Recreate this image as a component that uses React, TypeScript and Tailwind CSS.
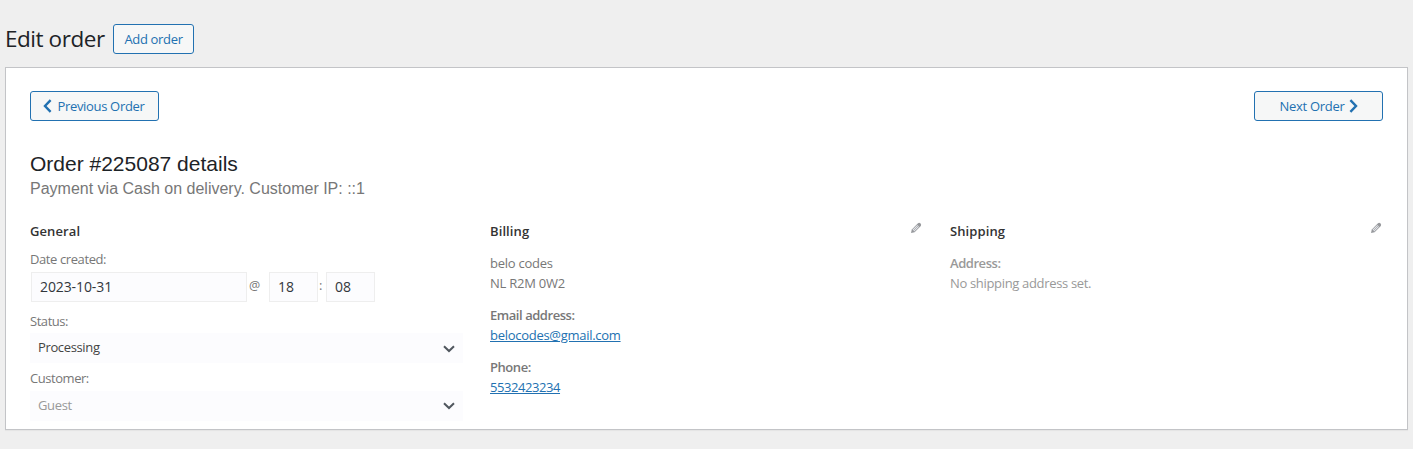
import type { ReactNode } from "react";

function Pencil() {
  return (
    <svg className="mt-[1px] mr-[1px] h-[12px] w-[12px]" viewBox="0 0 12 12" fill="none">
      <path d="M1 11 1.8 7.4 8 1.2Q9.2 .4 10.6 1.4 11.6 2.8 10.8 4L4.6 10.2Z" fill="#96989c" />
      <path d="M2.5 7.8 7.3 3 9 4.7 4.2 9.5Z" fill="#e4e6ea" />
      <path d="M3.2 8.8 8.2 3.8" stroke="#a3a5a9" strokeWidth=".8" />
    </svg>
  );
}

function Caret() {
  return (
    <svg className="mt-[2px] h-[8px] w-[12px]" viewBox="0 0 12 8" fill="none">
      <path d="M1 1.2 6 6 11 1.2" stroke="#50575e" strokeWidth="2" />
    </svg>
  );
}

function Chevron({ flip }: { flip?: boolean }) {
  return (
    <svg className={flip ? "h-[14px] w-[9px] rotate-180" : "h-[14px] w-[9px]"} viewBox="0 0 9 14" fill="none">
      <path d="M7.6 1.2 2 7 7.6 12.8" stroke="#2271b1" strokeWidth="2.4" />
    </svg>
  );
}

function Heading({ children, edit }: { children: ReactNode; edit?: boolean }) {
  return (
    <div className="flex h-[20px] items-start justify-between">
      <h3 className="text-[13px] leading-[20px] font-semibold tracking-[0.1px] text-[#333]">{children}</h3>
      {edit && <Pencil />}
    </div>
  );
}

export default function App() {
  return (
    <div className="h-[449px] w-[1413px] overflow-hidden bg-[#efefef] pt-[24px] pl-[5px] font-['Open_Sans','Noto_Sans',sans-serif] text-[13px] leading-[20px] tracking-[-0.36px] text-[#777]">
      <header className="flex h-[30px] items-center">
        <h1 className="w-[108px] text-[22.5px] leading-[30px] tracking-[-0.45px] whitespace-nowrap text-[#1d2327]">Edit order</h1>
        <button className="h-[30px] w-[81px] rounded-[3px] border border-[#2271b1] bg-[#f6f7f7] pt-[1px] leading-[27px] tracking-[-0.33px] whitespace-nowrap text-[#2271b1]">
          Add order
        </button>
      </header>

      <main className="mt-[13px] h-[363px] w-[1403px] border border-[#c3c4c7] bg-white px-[24px] pt-[23px] shadow-[0_1px_1px_rgba(0,0,0,0.04)]">
        <nav className="flex justify-between text-[#2271b1]">
          <button className="flex h-[30px] w-[129px] items-center justify-center gap-[6px] rounded-[3px] border border-[#2271b1] bg-[#f6f7f7] pr-[2px] tracking-[-0.33px] whitespace-nowrap">
            <Chevron />
            <span>Previous Order</span>
          </button>
          <button className="flex h-[30px] w-[129px] items-center justify-center gap-[5px] rounded-[3px] border border-[#2271b1] bg-[#f6f7f7] pl-[1px] tracking-[-0.3px] whitespace-nowrap">
            <span>Next Order</span>
            <Chevron flip />
          </button>
        </nav>

        <h2 className="mt-[29px] font-['Liberation_Sans',sans-serif] text-[21px] leading-[28px] tracking-normal text-[#1d2327]">
          Order #225087 details
        </h2>
        <p className="pt-[1px] font-['Liberation_Sans',sans-serif] text-[16px] leading-[20px] tracking-normal text-[#777]">
          Payment via Cash on delivery. Customer IP: ::1
        </p>

        <div className="mt-[22px] grid grid-cols-[433px_433px_433px] gap-[27px]">
          <section>
            <Heading>General</Heading>
            <div className="mt-[8px] tracking-[-0.4px]">Date created:</div>
            <div className="mt-[3px] flex pl-[1px] text-[14px] tracking-[-0.1px]">
              <div className="h-[30px] w-[216px] border border-[#eee] bg-[#fcfcfe] pl-[8px] leading-[28px] text-[#32373c]">2023-10-31</div>
              <span className="w-[22px] pl-[2px] text-[12.5px] leading-[27px]">@</span>
              <div className="h-[30px] w-[49px] border border-[#eee] bg-[#fcfcfe] pl-[8px] leading-[28px] text-[#32373c]">18</div>
              <span className="w-[8px] pl-[1px] text-[13px] leading-[26px]">:</span>
              <div className="h-[30px] w-[49px] border border-[#eee] bg-[#fcfcfe] pl-[8px] leading-[28px] text-[#32373c]">08</div>
            </div>
            <div className="mt-[9px] tracking-[-0.45px]">Status:</div>
            <div className="mt-[2px] flex h-[30px] items-center justify-between bg-[#fcfcfe] pr-[8px] pl-[8px] text-[#444]">
              <span className="-mt-[2px]">Processing</span>
              <Caret />
            </div>
            <div className="mt-[5px] tracking-[-0.45px]">Customer:</div>
            <div className="mt-[3px] flex h-[30px] items-center justify-between bg-[#fcfcfe] pr-[8px] pb-[2px] pl-[8px] text-[#999]">
              <span>Guest</span>
              <Caret />
            </div>
          </section>

          <section>
            <Heading edit>Billing</Heading>
            <p className="mt-[12px] tracking-[-0.25px]">
              belo codes
              <br />
              NL R2M 0W2
            </p>
            <p className="mt-[12px]">
              <strong className="font-semibold tracking-[-0.45px]">Email address:</strong>
              <br />
              <a className="tracking-[-0.28px] text-[#2271b1] underline">belocodes@gmail.com</a>
            </p>
            <p className="mt-[12px]">
              <strong className="font-semibold tracking-[-0.45px]">Phone:</strong>
              <br />
              <a className="tracking-[-0.43px] text-[#2271b1] underline">5532423234</a>
            </p>
          </section>

          <section>
            <Heading edit>Shipping</Heading>
            <p className="mt-[12px] tracking-[-0.33px] text-[#999]">
              <strong className="font-semibold tracking-[-0.45px]">Address:</strong>
              <br />
              No shipping address set.
            </p>
          </section>
        </div>
      </main>
    </div>
  );
}
